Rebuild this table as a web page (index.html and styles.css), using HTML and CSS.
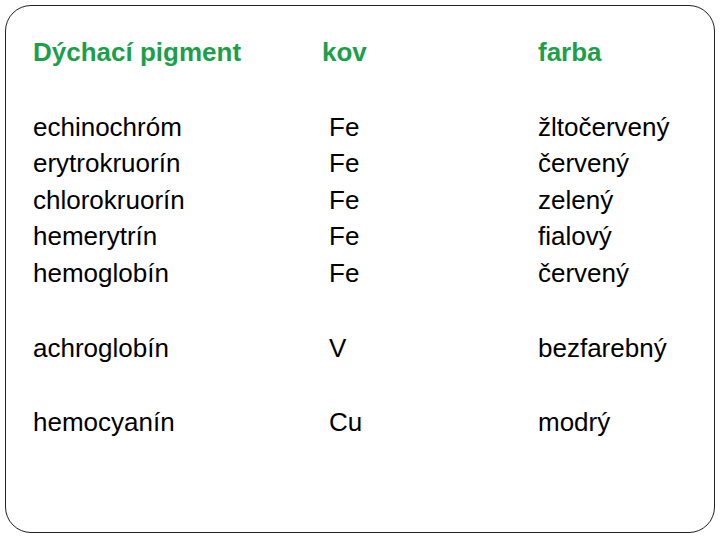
FILE: index.html
```html
<!DOCTYPE html>
<html lang="sk">
<head>
<meta charset="utf-8">
<link rel="stylesheet" href="styles.css">
</head>
<body>
<div class="slide">
  <div class="table">
    <div class="cell head">Dýchací pigment</div>
    <div class="cell head">kov</div>
    <div class="cell head">farba</div>

    <div class="cell">echinochróm<br>erytrokruorín<br>chlorokruorín<br>hemerytrín<br>hemoglobín</div>
    <div class="cell metal">Fe<br>Fe<br>Fe<br>Fe<br>Fe</div>
    <div class="cell">žltočervený<br>červený<br>zelený<br>fialový<br>červený</div>

    <div class="cell">achroglobín</div>
    <div class="cell metal">V</div>
    <div class="cell">bezfarebný</div>

    <div class="cell">hemocyanín</div>
    <div class="cell metal">Cu</div>
    <div class="cell">modrý</div>
  </div>
</div>
</body>
</html>
```
FILE: styles.css
```css
html, body {
  margin: 0;
  padding: 0;
  background: #ffffff;
}
body {
  width: 720px;
  height: 540px;
  padding: 5px;
  box-sizing: border-box;
}
.slide {
  width: 710px;
  height: 528px;
  box-sizing: border-box;
  border: 1px solid #222222;
  border-radius: 26px;
  padding: 28px 0 0 27px;
  font-family: "Liberation Sans", Arial, sans-serif;
  font-size: 26px;
  line-height: 36.6px;
  color: #000000;
}
.table {
  display: grid;
  grid-template-columns: 289px 216px 1fr;
  row-gap: 38px;
}
.head {
  font-weight: bold;
  color: #1c9f4b;
}
.metal {
  padding-left: 7px;
}
```
